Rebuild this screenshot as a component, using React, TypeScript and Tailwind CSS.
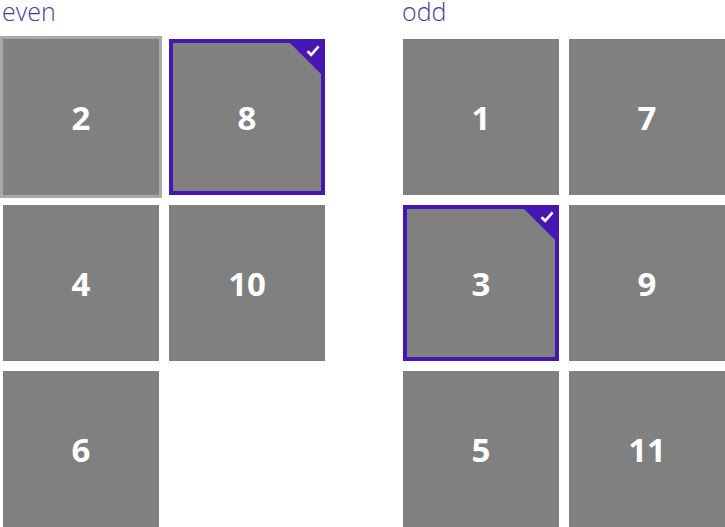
const groups = [
  { name: "even", items: [2, 4, 6, 8, 10], selected: [8], hover: 2 },
  { name: "odd", items: [1, 3, 5, 7, 9, 11], selected: [3], hover: null },
];

function Tile({ n, selected, hover }: { n: number; selected: boolean; hover: boolean }) {
  const label = (
    <span className="text-[33px] leading-none font-bold text-white">{n}</span>
  );

  if (selected) {
    return (
      <div className="relative w-[156px] h-[156px] bg-[#4617b4] p-1">
        <div
          className="w-full h-full bg-[#808080] flex items-center justify-center"
          style={{ clipPath: "polygon(0 0, 117px 0, 148px 31px, 148px 148px, 0 148px)" }}
        >
          {label}
        </div>
        <svg className="absolute top-[6px] right-[5px]" width="14" height="12" viewBox="0 0 14 12">
          <path d="M1.5 6.2 L5.2 9.8 L12.6 1.4" fill="none" stroke="white" strokeWidth="2.6" />
        </svg>
      </div>
    );
  }

  return (
    <div
      className={
        "w-[156px] h-[156px] bg-[#808080] flex items-center justify-center " +
        (hover ? "shadow-[0_0_0_3px_#a9a9a9]" : "")
      }
    >
      {label}
    </div>
  );
}

export default function App() {
  return (
    <div className="w-[725px] h-[527px] overflow-hidden bg-white font-['Open_Sans',sans-serif] flex gap-[78px] pl-[3px]">
      {groups.map((g) => (
        <div key={g.name} className="flex flex-col">
          <h2 className="h-[39px] -ml-px text-[25px] leading-[23px] font-light text-[#4b3aa6]">
            {g.name}
          </h2>
          <div className="grid grid-flow-col grid-rows-[repeat(3,156px)] auto-cols-[156px] gap-[10px]">
            {g.items.map((n) => (
              <Tile key={n} n={n} selected={g.selected.includes(n)} hover={g.hover === n} />
            ))}
          </div>
        </div>
      ))}
    </div>
  );
}
